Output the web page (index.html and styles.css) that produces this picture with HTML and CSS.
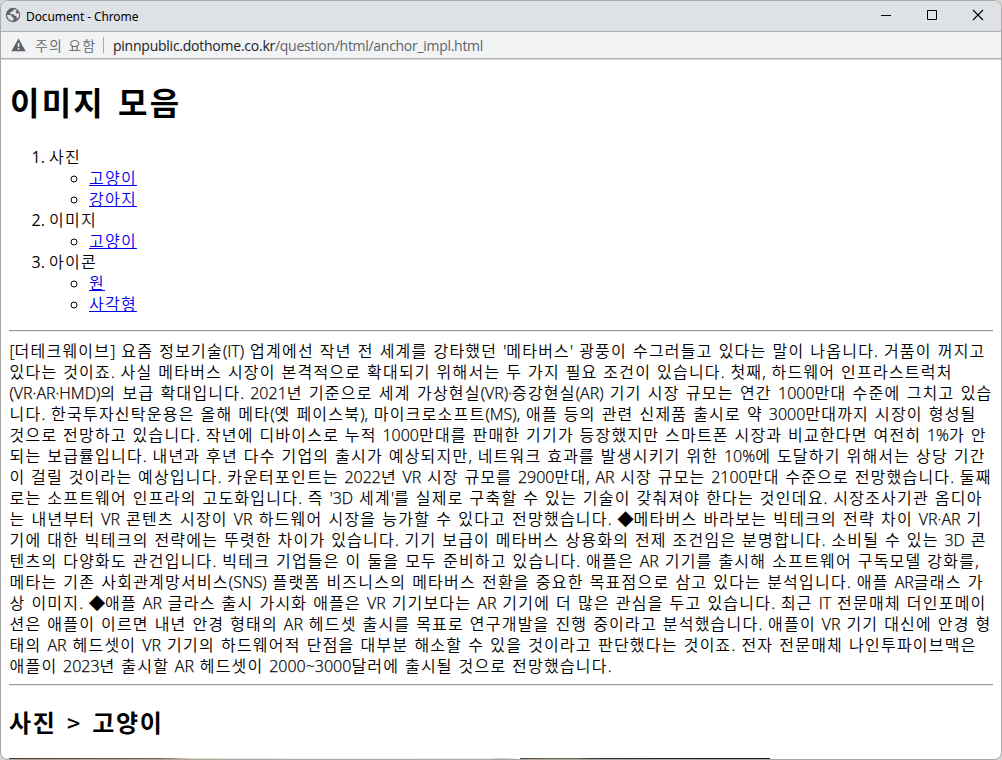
FILE: index.html
```html
<!DOCTYPE html>
<html lang="ko">
<head>
<meta charset="utf-8">
<title>Document</title>
<link rel="stylesheet" href="styles.css">
</head>
<body>
<div class="window">
  <header class="titlebar">
    <svg class="globe" viewBox="0 0 16 16"><circle cx="8" cy="8" r="7.2" fill="#5f6368"/><path d="M8.7 2.3 L8.5 3.5 Q6.8 3.7 6.7 5 L5 5.3 Q4.8 7 5.8 7.2 L8.4 7.2 Q9.5 7.6 9.3 8.8 L11 9 Q12 9.4 11.5 11 L13 11.2 Q14.5 9 14 6.3 L11.7 6.6 Q10.7 6.2 10.7 4.7 L12 3.5 Q10.5 2.2 8.7 2.3Z M1.9 8 L5.4 8.1 Q7.2 8.7 7.1 10.5 L8.8 10.7 L8.6 12.4 L7.4 13.9 Q2.5 13.1 1.9 8Z" fill="#dee1e6"/></svg>
    <span class="title">Document - Chrome</span>
    <div class="controls">
      <svg viewBox="0 0 12 12" shape-rendering="crispEdges"><path d="M1 6.5H11" stroke="#000"/></svg>
      <svg viewBox="0 0 12 12"><path d="M1.5 1.5H10.5V10.5H1.5Z" fill="none" stroke="#000"/></svg>
      <svg viewBox="0 0 12 12"><path d="M1 1L11 11M11 1L1 11" stroke="#000" stroke-width="1.1"/></svg>
    </div>
  </header>
  <div class="toolbar">
    <svg class="warn" viewBox="0 0 15 14"><path d="M7.5 .6L14.7 13.2H.3Z" fill="#5f6368"/><path d="M6.8 5h1.5v4H6.8ZM6.8 10h1.5v1.6H6.8Z" fill="#f1f3f4"/></svg>
    <span class="notice">주의 요함</span>
    <span class="divider"></span>
    <span class="url"><b data-fit="162">pinnpublic.dothome.co.kr</b><i data-fit="208">/question/html/anchor_impl.html</i></span>
  </div>
  <main class="page">
    <h1>이미지 모음</h1>
    <ol>
      <li><span>사진</span>
        <ul><li><a href="#a">고양이</a></li><li><a href="#b">강아지</a></li></ul>
      </li>
      <li><span>이미지</span>
        <ul><li><a href="#c">고양이</a></li></ul>
      </li>
      <li><span>아이콘</span>
        <ul><li><a href="#d">원</a></li><li><a href="#e">사각형</a></li></ul>
      </li>
    </ol>
    <hr>
    <div class="article">
      <p data-width="976">[더테크웨이브] 요즘 정보기술(IT) 업계에선 작년 전 세계를 강타했던 '메타버스' 광풍이 수그러들고 있다는 말이 나옵니다. 거품이 꺼지고</p>
      <p data-width="943">있다는 것이죠. 사실 메타버스 시장이 본격적으로 확대되기 위해서는 두 가지 필요 조건이 있습니다. 첫째, 하드웨어 인프라스트럭처</p>
      <p data-width="983">(VR·AR·HMD)의 보급 확대입니다. 2021년 기준으로 세계 가상현실(VR)·증강현실(AR) 기기 시장 규모는 연간 1000만대 수준에 그치고 있습</p>
      <p data-width="967">니다. 한국투자신탁운용은 올해 메타(옛 페이스북), 마이크로소프트(MS), 애플 등의 관련 신제품 출시로 약 3000만대까지 시장이 형성될</p>
      <p data-width="977">것으로 전망하고 있습니다. 작년에 디바이스로 누적 1000만대를 판매한 기기가 등장했지만 스마트폰 시장과 비교한다면 여전히 1%가 안</p>
      <p data-width="976">되는 보급률입니다. 내년과 후년 다수 기업의 출시가 예상되지만, 네트워크 효과를 발생시키기 위한 10%에 도달하기 위해서는 상당 기간</p>
      <p data-width="982">이 걸릴 것이라는 예상입니다. 카운터포인트는 2022년 VR 시장 규모를 2900만대, AR 시장 규모는 2100만대 수준으로 전망했습니다. 둘째</p>
      <p data-width="973">로는 소프트웨어 인프라의 고도화입니다. 즉 '3D 세계'를 실제로 구축할 수 있는 기술이 갖춰져야 한다는 것인데요. 시장조사기관 옴디아</p>
      <p data-width="973">는 내년부터 VR 콘텐츠 시장이 VR 하드웨어 시장을 능가할 수 있다고 전망했습니다. ◆메타버스 바라보는 빅테크의 전략 차이 VR·AR 기</p>
      <p data-width="977">기에 대한 빅테크의 전략에는 뚜렷한 차이가 있습니다. 기기 보급이 메타버스 상용화의 전제 조건임은 분명합니다. 소비될 수 있는 3D 콘</p>
      <p data-width="969">텐츠의 다양화도 관건입니다. 빅테크 기업들은 이 둘을 모두 준비하고 있습니다. 애플은 AR 기기를 출시해 소프트웨어 구독모델 강화를,</p>
      <p data-width="974">메타는 기존 사회관계망서비스(SNS) 플랫폼 비즈니스의 메타버스 전환을 중요한 목표점으로 삼고 있다는 분석입니다. 애플 AR글래스 가</p>
      <p data-width="977">상 이미지. ◆애플 AR 글라스 출시 가시화 애플은 VR 기기보다는 AR 기기에 더 많은 관심을 두고 있습니다. 최근 IT 전문매체 더인포메이</p>
      <p data-width="982">션은 애플이 이르면 내년 안경 형태의 AR 헤드셋 출시를 목표로 연구개발을 진행 중이라고 분석했습니다. 애플이 VR 기기 대신에 안경 형</p>
      <p data-width="967">태의 AR 헤드셋이 VR 기기의 하드웨어적 단점을 대부분 해소할 수 있을 것이라고 판단했다는 것이죠. 전자 전문매체 나인투파이브맥은</p>
      <p data-width="602">애플이 2023년 출시할 AR 헤드셋이 2000~3000달러에 출시될 것으로 전망했습니다.</p>
    </div>
    <hr>
    <h2>사진 <span class="crumb">&gt;</span> 고양이</h2>
    <div class="photos"><div class="photo cat"></div><div class="photo cat2"></div></div>
  </main>
</div>
<script src="script.js"></script>
</body>
</html>
```

FILE: styles.css
```css
* { box-sizing: border-box; }
html { height: 100%; background: #d6d6d6; }
body {
  margin: 0;
  height: 100%;
  overflow: hidden;
  font-family: "Open Sans", "Noto Sans CJK KR", sans-serif;
  font-size: 16px;
  line-height: 21px;
  color: #000;
}
.window {
  height: 760px;
  border: 1px solid #a8a8a8;
  border-radius: 8px;
  overflow: hidden;
  background: #fff;
  display: flex;
  flex-direction: column;
}
.titlebar {
  flex: none;
  height: 31px;
  background: #dee1e6;
  border-bottom: 1px solid #aeb0b3;
  display: flex;
  align-items: center;
  padding: 0 17px 2px 4px;
}
.globe { width: 16px; height: 16px; }
.title {
  margin-left: 5px;
  padding-top: 2px;
  font-family: "Noto Sans", sans-serif;
  font-size: 12px;
  letter-spacing: -0.1px;
}
.controls { margin-left: auto; display: flex; gap: 34px; }
.controls svg { width: 12px; height: 12px; }
.toolbar {
  flex: none;
  height: 28px;
  background: #f1f3f4;
  border-bottom: 1px solid #d8d9da;
  box-shadow: inset 0 -1px #b0b1b3;
  display: flex;
  align-items: center;
  padding: 0 0 1px 10px;
  font-size: 14px;
}
.warn { width: 15px; height: 14px; }
.notice {
  margin-left: 9px;
  width: 61px;
  white-space: nowrap;
  color: #5f6368;
  font-family: "Noto Sans CJK KR", sans-serif;
  font-weight: 350;
  letter-spacing: 1.2px;
}
.divider { width: 1px; height: 16px; margin-left: 7px; background: #a7a9ac; }
.url { margin-left: 9px; white-space: nowrap; }
.url b { font-weight: 400; color: #202124; }
.url i { font-style: normal; color: #5f6368; }
.page { flex: 1; min-height: 0; overflow: hidden; padding: 0 8px; }
h1, h2 { font-family: "Noto Sans CJK KR", sans-serif; font-weight: 700; }
h1 {
  margin: 20px 0 22px;
  padding-left: 1px;
  font-size: 32px;
  line-height: 43px;
  letter-spacing: 2.2px;
  word-spacing: 2px;
}
h2 {
  margin: 20px 0;
  font-size: 24px;
  line-height: 32px;
  letter-spacing: 1.7px;
  word-spacing: 2px;
}
.crumb { font-weight: 500; font-size: 23px; }
ol, ul { margin: 0; padding-left: 40px; font-weight: 350; }
ol { margin: 24px 0 15px; }
ol span, ol a { letter-spacing: 1.25px; }
ol > li::marker { font-family: "Open Sans", sans-serif; font-weight: 400; letter-spacing: 0; }
ul { list-style: circle; }
a { color: #0000ee; text-decoration: underline; }
hr {
  margin: 8px 0;
  height: 2px;
  border: 0;
  border-top: 1px solid #9a9a9a;
  border-bottom: 1px solid #ececec;
}
.article { padding: 1px 0 0 0.5px; height: 336px; }
.article p { margin: 0; height: 21px; white-space: nowrap; }
.hangul { font-weight: 350; letter-spacing: 1.22px; }
.latin { font-weight: 300; -webkit-text-stroke: 0.25px #000; }
.photos { display: flex; gap: 4px; }
.photo { height: 200px; }
.cat { width: 507px; background: linear-gradient(90deg, #4f3a25, #806647 30%, #e6d9bd 36%, #e7f2f2 55%, #e4f1f4 95%, #cfc0b0 97%, #eee 100%); }
.cat2 { width: 250px; background: linear-gradient(90deg, #4a4238, #78614f 10%, #697459 22%, #41382a 28%, #282319 65%, #17150f); }
```

FILE: script.js
```js
// Give Hangul and Latin runs their own tracking, then set each line's word gaps.
document.querySelectorAll('.article p').forEach(function (p) {
  const runs = p.textContent.match(/[가-힣]+|[^가-힣]+/g);
  p.textContent = '';
  const line = document.createElement('span');
  runs.forEach(function (run) {
    const s = document.createElement('span');
    s.className = /[가-힣]/.test(run) ? 'hangul' : 'latin';
    s.textContent = run;
    line.appendChild(s);
  });
  p.appendChild(line);
  const spaces = line.textContent.split(' ').length - 1;
  const gap = (Number(p.dataset.width) - line.getBoundingClientRect().width) / spaces;
  p.style.wordSpacing = gap + 'px';
});
document.querySelectorAll('[data-fit]').forEach(function (el) {
  const gap = (Number(el.dataset.fit) - el.getBoundingClientRect().width) / el.textContent.length;
  el.style.letterSpacing = gap + 'px';
});
```
